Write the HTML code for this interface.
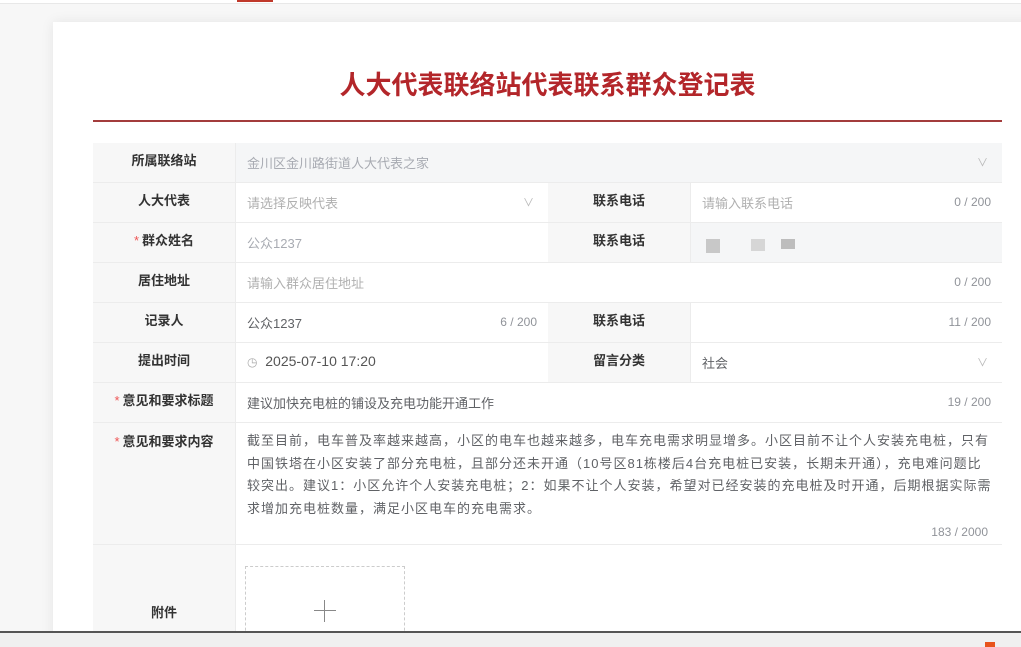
<!DOCTYPE html>
<html><head><meta charset="utf-8"><style>
*{margin:0;padding:0;box-sizing:border-box}
body{width:1021px;height:647px;overflow:hidden;background:#f7f7f7;font-family:"Liberation Sans","Noto Sans CJK SC",sans-serif;position:relative}
.a{position:absolute}
.card{left:53px;top:22px;width:980px;height:620px;background:#fff;box-shadow:0 0 12px rgba(0,0,0,.08)}
.title{left:93px;width:909px;top:65px;text-align:center;font-size:26px;font-weight:bold;color:#b3262a}
.rl{left:93px;top:120px;width:909px;height:2px;background:#a33c3c}
.lab{background:#f7f7f7;font-size:13px;font-weight:bold;color:#333;text-align:center;padding-top:7px;border-bottom:1px solid #ececec}
.val{background:#fff;font-size:13px;color:#606266;padding:10px 11px 0;border-bottom:1px solid #ececec;border-left:1px solid #ececec}
.ph{color:#b0b0b0}
.dis{background:#f5f6f7;color:#a8abb2}
.cnt{position:absolute;right:11px;top:12px;font-size:12px;color:#909399}
.arr{position:absolute;right:14px;top:11px;color:#b6b6b6;font-size:11px}
.st{color:#e55;font-weight:normal;margin-right:3px}
</style></head><body>
<div class="a" style="left:0;top:0;width:1021px;height:4px;background:#fff;border-bottom:1px solid #e8e8e8"></div>
<div class="a" style="left:237px;top:0;width:36px;height:2px;background:#c0392b"></div>
<div class="a card"></div>
<div class="a title">人大代表联络站代表联系群众登记表</div>
<div class="a rl"></div>

<div class="a lab" style="left:93px;top:143px;width:142px;height:40px">所属联络站</div>
<div class="a val dis" style="left:235px;top:143px;width:767px;height:40px">金川区金川路街道人大代表之家<span class="arr">∨</span></div>

<div class="a lab" style="left:93px;top:183px;width:142px;height:40px">人大代表</div>
<div class="a val" style="left:235px;top:183px;width:313px;height:40px"><span class="ph">请选择反映代表</span><span class="arr">∨</span></div>
<div class="a lab" style="left:548px;top:183px;width:142px;height:40px">联系电话</div>
<div class="a val" style="left:690px;top:183px;width:312px;height:40px"><span class="ph">请输入联系电话</span><span class="cnt">0 / 200</span></div>

<div class="a lab" style="left:93px;top:223px;width:142px;height:40px"><span class="st">*</span>群众姓名</div>
<div class="a val" style="left:235px;top:223px;width:313px;height:40px;color:#a8abb2">公众1237</div>
<div class="a lab" style="left:548px;top:223px;width:142px;height:40px">联系电话</div>
<div class="a val dis" style="left:690px;top:223px;width:312px;height:40px">
<div class="a" style="left:15px;top:16px;width:14px;height:14px;background:#c8c8c8"></div>
<div class="a" style="left:60px;top:16px;width:14px;height:12px;background:#d6d6d6"></div>
<div class="a" style="left:90px;top:16px;width:14px;height:10px;background:#bdbdbd"></div></div>

<div class="a lab" style="left:93px;top:263px;width:142px;height:40px">居住地址</div>
<div class="a val" style="left:235px;top:263px;width:767px;height:40px"><span class="ph">请输入群众居住地址</span><span class="cnt">0 / 200</span></div>

<div class="a lab" style="left:93px;top:303px;width:142px;height:40px">记录人</div>
<div class="a val" style="left:235px;top:303px;width:313px;height:40px">公众1237<span class="cnt">6 / 200</span></div>
<div class="a lab" style="left:548px;top:303px;width:142px;height:40px">联系电话</div>
<div class="a val" style="left:690px;top:303px;width:312px;height:40px"><span class="cnt">11 / 200</span></div>

<div class="a lab" style="left:93px;top:343px;width:142px;height:40px">提出时间</div>
<div class="a val" style="left:235px;top:343px;width:313px;height:40px;font-size:14px;color:#555"><span style="color:#aaa;font-size:12px">◷</span>&nbsp; 2025-07-10 17:20</div>
<div class="a lab" style="left:548px;top:343px;width:142px;height:40px">留言分类</div>
<div class="a val" style="left:690px;top:343px;width:312px;height:40px">社会<span class="arr">∨</span></div>

<div class="a lab" style="left:93px;top:383px;width:142px;height:40px"><span class="st">*</span>意见和要求标题</div>
<div class="a val" style="left:235px;top:383px;width:767px;height:40px">建议加快充电桩的铺设及充电功能开通工作<span class="cnt">19 / 200</span></div>

<div class="a lab" style="left:93px;top:423px;width:142px;height:122px;padding-top:8px"><span class="st">*</span>意见和要求内容</div>
<div class="a val" style="left:235px;top:423px;width:767px;height:122px;line-height:22.5px;padding-top:7px;padding-right:0;letter-spacing:1.0px;white-space:nowrap;overflow:hidden">截至目前，电车普及率越来越高，小区的电车也越来越多，电车充电需求明显增多。小区目前不让个人安装充电桩，只有<br>中国铁塔在小区安装了部分充电桩，且部分还未开通（10号区81栋楼后4台充电桩已安装，长期未开通），充电难问题比<br>较突出。建议1：小区允许个人安装充电桩；2：如果不让个人安装，希望对已经安装的充电桩及时开通，后期根据实际需<br>求增加充电桩数量，满足小区电车的充电需求。<span class="cnt" style="top:98px;right:14px;letter-spacing:0">183 / 2000</span></div>

<div class="a lab" style="left:93px;top:545px;width:142px;height:90px;padding-top:57px">附件</div>
<div class="a val" style="left:235px;top:545px;width:767px;height:90px"></div>
<div class="a" style="left:245px;top:566px;width:160px;height:80px;border:1px dashed #ccc;background:#fff"></div>
<div class="a" style="left:314px;top:610px;width:22px;height:1px;background:#888"></div>
<div class="a" style="left:324px;top:600px;width:1px;height:22px;background:#888"></div>

<div class="a" style="left:0;top:631px;width:1021px;height:16px;background:#f0f0f0;border-top:2px solid #555"></div>
<div class="a" style="left:985px;top:642px;width:10px;height:5px;background:#e8541c"></div>
</body></html>
